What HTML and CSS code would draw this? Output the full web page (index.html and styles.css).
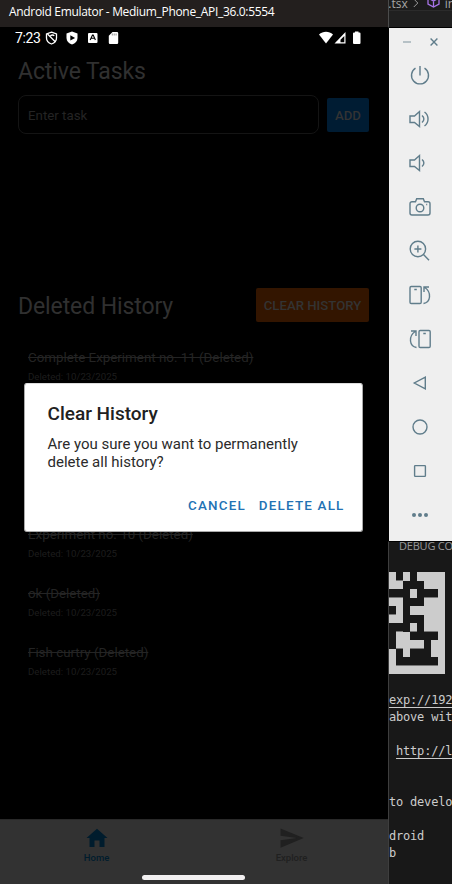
FILE: index.html
```html
<!DOCTYPE html>
<html lang="en">
<head>
<meta charset="utf-8">
<title>Android Emulator</title>
<link rel="stylesheet" href="styles.css">
</head>
<body>
<div class="desktop">
  <section class="emulator">
    <header class="titlebar">Android Emulator - Medium_Phone_API_36.0:5554</header>
    <div class="screen">
      <div class="statusbar">
        <span class="clock">7:23</span>
        <svg class="status-left" width="76" height="14" viewBox="0 0 76 14">
          <path d="M6.500 1.200 11.500 3v4c0 3-2 5-5 6-3-1-5-3-5-6V3z" fill="none" stroke="#fff" stroke-width="1.300"/>
          <path d="M2.500 3 10.500 11M9.300 4.800C8 3.600 6 3.800 5.500 5" fill="none" stroke="#fff" stroke-width="1.300"/>
          <path d="M27 .5 32.500 2.500v4.500c0 3-2.200 5.400-5.500 6.500-3.300-1.100-5.500-3.500-5.500-6.500V2.500z" fill="#fff"/>
          <path d="m25.300 4.200 4.800 2.700-4.800 2.700z" fill="#000"/>
          <rect x="43" y="2" width="9.500" height="10" rx="1" fill="#fff"/>
          <path d="m45.200 9 2.300-5h.7l2.200 5M46 7.300h3.600" fill="none" stroke="#000" stroke-width="1.100"/>
          <path d="M67.500 1H72a1.200 1.200 0 0 1 1.200 1.200v9.600A1.200 1.200 0 0 1 72 13h-7a1.200 1.200 0 0 1-1.200-1.200V4.700z" fill="#fff"/>
          <path d="M67.300 2.500v2M69.200 2.500v2M71.100 2.500v2" stroke="#777" stroke-width=".8"/>
        </svg>
        <svg class="status-right" width="43" height="14" viewBox="0 0 43 14">
          <path d="M0 3.500C4-.2 10-.2 14 3.500L7 12.500z" fill="#fff"/>
          <path d="M26.500 1v11.500H15.500z" fill="#fff"/><path d="M25.300 5v6.300h-3.800V8.800z" fill="#000"/>
          <path d="M36 1.500V.5h3.500v1h1a1 1 0 0 1 1 1V12a1 1 0 0 1-1 1H35a1 1 0 0 1-1-1V2.500a1 1 0 0 1 1-1z" fill="#fff"/>
        </svg>
      </div>
      <main class="app">
        <h1 class="heading">Active Tasks</h1>
        <div class="entry">
          <div class="field">Enter task</div>
          <div class="btn add">ADD</div>
        </div>
        <div class="history-head">
          <h2 class="heading">Deleted History</h2>
          <div class="btn clear">CLEAR HISTORY</div>
        </div>
        <ul class="history">
          <li><p class="task">Complete Experiment no. 11 (Deleted)</p><p class="date">Deleted: 10/23/2025</p></li>
          <li class="covered"></li>
          <li class="covered"></li>
          <li><p class="task">Experiment no. 10 (Deleted)</p><p class="date">Deleted: 10/23/2025</p></li>
          <li><p class="task">ok (Deleted)</p><p class="date">Deleted: 10/23/2025</p></li>
          <li><p class="task">Fish curtry (Deleted)</p><p class="date">Deleted: 10/23/2025</p></li>
        </ul>
      </main>
      <nav class="tabs">
        <div class="tab home">
          <svg width="22" height="20" viewBox="0 0 22 20"><path d="M11 .7 21.500 10h-3v9h-5v-6.500h-5V19h-5v-9h-3z" fill="currentColor"/></svg>
          <span>Home</span>
        </div>
        <div class="tab explore">
          <svg width="24" height="20" viewBox="0 0 24 20"><path d="M.5.500 23.700 10 .5 19.700V12.200L16.500 10 .5 7.800z" fill="currentColor"/></svg>
          <span>Explore</span>
        </div>
      </nav>
      <div class="gesture"></div>
      <div class="dialog">
        <h3>Clear History</h3>
        <p>Are you sure you want to permanently<br>delete all history?</p>
        <div class="actions"><span class="cancel">CANCEL</span><span class="delete">DELETE ALL</span></div>
      </div>
    </div>
  </section>
  <aside class="side">
    <div class="editor">
      <div class="crumbs"><span class="crumb-file">x.tsx</span>
        <svg width="6" height="10" viewBox="0 0 6 10"><path d="m.8 0 4 4-4 4" fill="none" stroke="#9a9a9a"/></svg>
        <svg class="cube" width="13" height="14" viewBox="0 0 13 14"><path d="m6.500 1 5.500 3v6l-5.500 3L1 10V4zM1 4l5.500 3L12 4M6.500 7v6" fill="none" stroke="#a874e8" stroke-width="1.300"/></svg>
        <span class="crumb-symbol">in</span></div>
    </div>
    <div class="toolbar">
      <div class="winctl">
        <svg width="8" height="8" viewBox="0 0 8 8"><path d="M0 4h8" stroke="#98a9b1" stroke-width="1.300"/></svg>
        <svg width="8" height="8" viewBox="0 0 8 8"><path d="m.6.600 6.800 6.800M7.400.6.600 7.400" stroke="#607d8b" stroke-width="1.400"/></svg>
      </div>
      <svg class="tool" viewBox="0 0 24 24"><path d="M12 3v9.500M7.500 5.200a8.500 8.500 0 1 0 9 0"/></svg>
      <svg class="tool" viewBox="0 0 24 24"><path d="M2 9v6.500h4.500l5 4V4.500l-5 4.500zM14 8.500c2.500 2 2.500 5 0 7M16.500 5c4.700 3.500 4.700 10.500 0 14"/></svg>
      <svg class="tool" viewBox="0 0 24 24"><path d="M2 9v6.500h4.500l5 4V4.500l-5 4.500zM14 8.500c2.500 2 2.500 5 0 7"/></svg>
      <svg class="tool" viewBox="0 0 24 24"><path d="M4 6.700h3.500l1.200-3h6.600l1.200 3H20a2 2 0 0 1 2 2V18a2 2 0 0 1-2 2H4a2 2 0 0 1-2-2V8.700a2 2 0 0 1 2-2z"/><circle cx="12" cy="13" r="3.800"/><path d="M18.200 9.500h1"/></svg>
      <svg class="tool" viewBox="0 0 24 24"><circle cx="9.900" cy="10" r="7.700"/><path d="m15.500 15.500 5.500 5.700M9.900 6.500v7M6.400 10h7"/></svg>
      <svg class="tool" viewBox="0 0 24 24"><rect x="2" y="3.500" width="11.200" height="17" rx="1.200"/><path d="M6.300 6.500h2.500M15.500 20.500c7-1 8.600-11 1.300-16M16 9V4h5"/></svg>
      <svg class="tool" viewBox="0 0 24 24"><rect x="11" y="3.500" width="11.200" height="17" rx="1.200"/><path d="M15.300 6.500h2.500M8.500 20.500c-7-1-8.600-11-1.300-16M8 9V4H3"/></svg>
      <svg class="tool" viewBox="0 0 24 24"><path d="M17.300 6.200v11.600L6.300 12z"/></svg>
      <svg class="tool" viewBox="0 0 24 24"><circle cx="12" cy="12" r="7"/></svg>
      <svg class="tool" viewBox="0 0 24 24"><rect x="6.600" y="6.600" width="10.800" height="10.800" rx=".7"/></svg>
      <svg class="tool dots" viewBox="0 0 24 24"><circle cx="6" cy="12" r="2"/><circle cx="12" cy="12" r="2"/><circle cx="18" cy="12" r="2"/></svg>
    </div>
    <div class="terminal">
      <div class="panel-tab">DEBUG CO</div>
      <svg class="qr" width="57" height="102" viewBox="0 0 8.143 12" preserveAspectRatio="none" shape-rendering="crispEdges">
        <path d="M0 0h8.143v12H0z" fill="#ccc"/>
        <path transform="translate(.143 0)" fill="#181818" d="M1 0h1v1h-1zM3 0h1v1h-1zM2 1h3v1h-3zM0 2h3v1h-3zM4 2h3v1h-3zM2 3h3v1h-3zM0 4h1v1h-1zM2 4h1v1h-1zM2 5h3v1h-3zM0 6h3v1h-3zM4 6h1v1h-1zM0 7h1v1h-1zM3 7h4v1h-4zM0 8h1v1h-1zM5 8h1v1h-1zM1 9h1v1h-1zM3 9h3v1h-3zM1 10h6v1h-6z"/>
        <path transform="translate(.143 0)" fill="#777" d="M1 .9h1v.12h-1zM0 2.900h2v.12h-2zM5 2.900h2v.12h-2zM0 4.900h1v.12h-1zM3 6.900h1v.12h-1zM1 6.900h1v.12h-1zM5 6.900h2v.12h-2zM1 8.900h1v.12h-1zM3 8.900h2v.12h-2zM1 10.900h6v.12h-6z"/>
      </svg>
      <pre class="log"><u>exp://192</u>
above wit

 <u>http://l</u>


to develo

droid
b

 </pre>
    </div>
  </aside>
</div>
</body>
</html>
```
FILE: styles.css
```css
* { box-sizing: border-box; }
html, body { margin: 0; height: 100%; overflow: hidden; background: #181818; }
h1, h2, h3, p, ul, pre { margin: 0; padding: 0; font-weight: 400; }
ul { list-style: none; }
svg { display: block; flex: none; }
.desktop { display: flex; width: 452px; height: 884px; overflow: hidden; }

.emulator { width: 388px; flex: none; display: flex; flex-direction: column; background: #000; }
.titlebar { height: 27px; background: #231f1e; color: #fff; font: 12px/24px "Open Sans", "Noto Sans", sans-serif; padding-left: 9px; white-space: nowrap; letter-spacing: -.32px; }
.screen { position: relative; flex: 1; background: #000; font-family: Roboto, sans-serif; display: flex; flex-direction: column; }
.statusbar { height: 22px; display: flex; align-items: center; color: #fff; padding: 0 26px 0 15px; }
.clock { font-size: 14px; width: 30px; letter-spacing: -.35px; }
.status-right { margin-left: auto; }

.app { flex: 1; padding: 9px 19px 0 18px; }
.heading { font-size: 23px; line-height: 28px; letter-spacing: -.1px; color: #303030; white-space: nowrap; }
.entry { display: flex; align-items: center; justify-content: space-between; margin-top: 9px; height: 39px; }
.field { width: 301px; height: 39px; border: 1px solid #141414; border-radius: 8px; color: #242424; font-size: 13.300px; line-height: 39px; padding-left: 9px; }
.btn { border-radius: 2px; height: 34px; line-height: 36px; font-size: 13.200px; font-weight: 500; text-align: center; white-space: nowrap; }
.add { width: 42px; background: #001c33; color: #333; }
.clear { width: 113px; background: #331500; color: #333; }
.history-head { display: flex; justify-content: space-between; align-items: center; margin-top: 154px; height: 34px; }
.history-head .heading { padding-top: 4px; line-height: 30px; }
.history { margin: 18px 0 0 10px; }
.history li { height: 59px; padding-top: 8px; }
.task { font-size: 13.350px; line-height: 20px; color: #242424; text-decoration: line-through; }
.date { font-size: 9.700px; line-height: 12px; margin-top: 3px; color: #1d1d1d; }

.tabs { height: 65px; background: #323232; border-top: 1px solid #292929; display: flex; }
.tab { flex: 1; display: flex; flex-direction: column; align-items: center; padding-top: 8px; font-size: 9.500px; line-height: 12px; gap: 4px; font-weight: 500; }
.home { color: #001c2d; padding-right: 2px; }
.explore { color: #202020; }
.gesture { position: absolute; left: 142px; bottom: 4px; width: 103px; height: 5px; border-radius: 3px; background: #f2f0f1; }

.dialog { position: absolute; left: 24px; top: 356px; width: 339px; height: 149px; background: #fff; border: 1px solid #aaa; border-top-color: #ddd; border-radius: 3px; padding: 18px 18px 0 22.500px; color: #212121; }
.dialog h3 { font-size: 19px; line-height: 24px; font-weight: 500; }
.dialog p { font-size: 15px; line-height: 17.500px; margin-top: 10px; color: #2b2b2b; }
.actions { display: flex; justify-content: flex-end; gap: 13px; margin: 27px -.5px 0 0; color: #2272b4; font-size: 13.400px; line-height: 16px; font-weight: 500; letter-spacing: 1.200px; white-space: nowrap; }

.side { width: 64px; display: flex; flex-direction: column; background: #000; }
.editor { height: 28px; background: #202020; border-left: 1px solid #4b4b4b; border-bottom: 1px solid #000; overflow: hidden; }
.crumbs { height: 11px; display: flex; align-items: flex-start; background: #1c1c1c; border-bottom: 1px solid #2b2b2b; color: #a6a6a6; font: 12px/8px "Open Sans", sans-serif; white-space: nowrap; }
.crumb-file { margin-left: -7px; width: 28px; }
.crumbs svg { margin-left: 5px; margin-top: -1px; }
.crumbs .cube { margin: -6px 5px 0 8px; }
.toolbar { height: 513px; margin-left: 1px; background: #efefef; padding-right: 2px; display: flex; flex-direction: column; align-items: center; }
.winctl { display: flex; gap: 19px; margin: 10px 0 17px 1px; }
.tool { width: 24px; height: 24px; margin-bottom: 20px; fill: none; stroke: #607d8b; stroke-width: 1.400; }
.dots { fill: #607d8b; stroke: none; }
.terminal { flex: 1; background: #181818; border-left: 1px solid #3e3e3e; border-top: 1px solid #000; overflow: hidden; }
.panel-tab { height: 30px; padding-left: 10px; font: 11px/8px "Open Sans", sans-serif; letter-spacing: -.2px; color: #999; white-space: nowrap; }
.qr { margin-left: -1px; }
.log { margin-top: 18px; color: #ccc; font: 12px/17px "DejaVu Sans Mono", monospace; letter-spacing: -.2px; }
.log u { text-underline-offset: 3px; }
```
